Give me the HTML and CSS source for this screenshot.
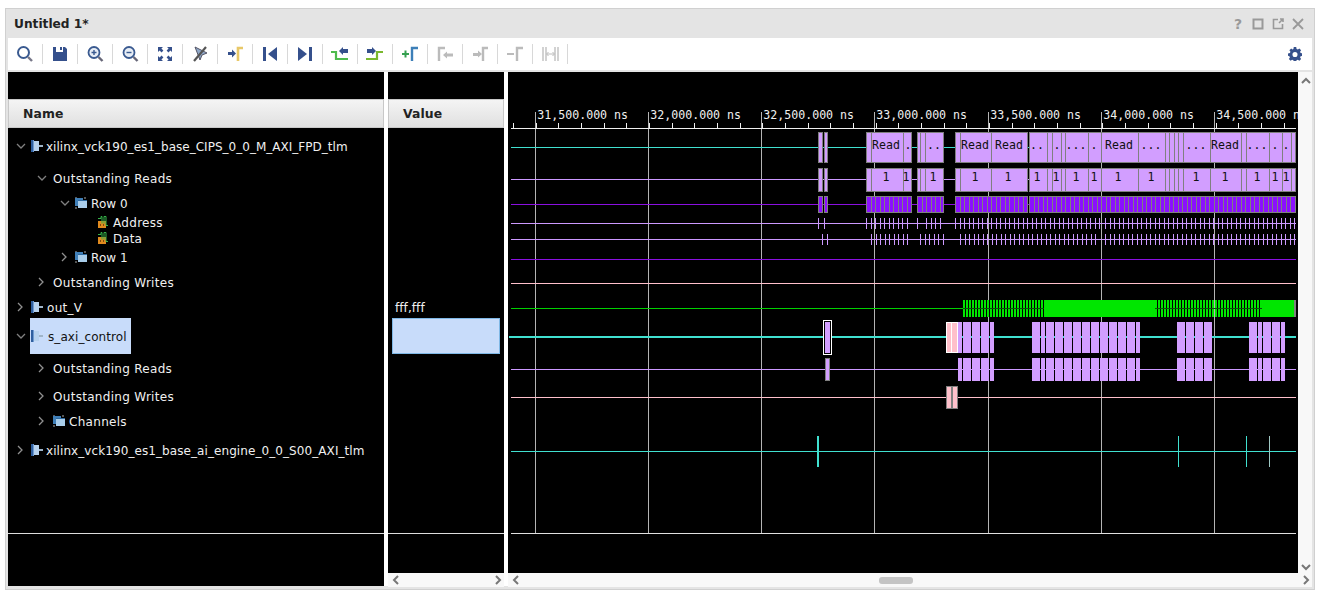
FILE: index.html
```html
<!DOCTYPE html>
<html lang="en">
  <head>
    <meta charset="UTF-8" />
    <title>Untitled 1*</title>
    <link rel="stylesheet" href="styles.css">
  </head>

  <body>
    <svg class="defs" width="0" height="0">
      <defs>
        <g id="ic-bus">
          <rect x="0" y="0" width="2" height="12" fill="#2f5f9f" />
          <rect x="2" y="0" width="1" height="12" fill="#6f9bd0" />
          <rect x="3" y="1" width="5" height="10" fill="#b7d2ee" />
          <rect x="8" y="5" width="4" height="2" fill="#9fb4c8" />
        </g>
        <g id="ic-group">
          <rect x="0" y="0" width="2" height="2" fill="#555" />
          <rect x="9" y="0" width="2" height="2" fill="#555" />
          <rect x="0" y="1" width="8" height="8" fill="#3f7fb8" />
          <rect x="3" y="3" width="9" height="8" fill="#a9cdea" />
          <rect x="3" y="3" width="9" height="1" fill="#2f6aa0" />
          <rect x="0" y="10" width="2" height="2" fill="#555" />
        </g>
        <g id="ic-leaf">
          <rect x="0" y="5" width="8" height="7" fill="#e08a1e" />
          <path d="M0 2.500h3V0.500h1v7M6 7.500V0.500h2v9h2" fill="none" stroke="#37b34a" />
          <rect x="2" y="8" width="1" height="2" fill="#7a4a10" />
          <rect x="5" y="8" width="1" height="2" fill="#7a4a10" />
        </g>
        <path id="chev-down" d="M1 1l4 4 4-4" fill="none" stroke="#808080" stroke-width="1.3" />
        <path id="chev-right" d="M1 1l4 4-4 4" fill="none" stroke="#909090" stroke-width="1.3" />
      </defs>
    </svg>

    <div class="window">
      <header class="titlebar">
        <h1>Untitled 1*</h1>
        <div class="win-btns">
          <span class="help">?</span>
          <svg width="12" height="12"><rect x="1.5" y="1.5" width="9" height="9" fill="none" stroke="#999" stroke-width="2" /></svg>
          <svg width="12" height="12"><path d="M6 1.500H1.500v9h9V6M7 5l4-4M8 1h3v3" fill="none" stroke="#999" stroke-width="1.6" /></svg>
          <svg width="12" height="12"><path d="M1 1l10 10M11 1L1 11" stroke="#999" stroke-width="1.8" /></svg>
        </div>
      </header>

      <nav class="toolbar">
        <button><svg width="20" height="20"><circle cx="8.5" cy="8.5" r="5.5" fill="none" stroke="#3a5a90" stroke-width="2" /><path d="M13 13l4 4" stroke="#778" stroke-width="2.4" /></svg></button>
        <button><svg width="20" height="20"><path d="M3 3h3v5h7V3h2l2 2v12H3z" fill="#35508c" /><rect x="10" y="3" width="2" height="3" fill="#35508c" /></svg></button>
        <button><svg width="20" height="20"><circle cx="9" cy="8.5" r="5.5" fill="#e8eef6" stroke="#3a5a90" stroke-width="1.8" /><path d="M6.500 8.500h5M9 6v5" stroke="#3a5a90" stroke-width="1.4" /><path d="M13.500 13l4 4" stroke="#667" stroke-width="2.4" /></svg></button>
        <button><svg width="20" height="20"><circle cx="9" cy="8.5" r="5.5" fill="#e8eef6" stroke="#3a5a90" stroke-width="1.8" /><path d="M6.500 8.500h5" stroke="#3a5a90" stroke-width="1.4" /><path d="M13.500 13l4 4" stroke="#667" stroke-width="2.4" /></svg></button>
        <button><svg width="20" height="20"><path d="M3 3h5L6.400 4.600l2 2-1.800 1.800-2-2L3 8zM17 3v5l-1.600-1.600-2 2-1.800-1.800 2-2L12 3zM3 17v-5l1.600 1.600 2-2 1.800 1.800-2 2L8 17zM17 17h-5l1.600-1.600-2-2 1.800-1.800 2 2L17 12z" fill="#35508c" /></svg></button>
        <button><svg width="20" height="20"><path d="M5 3l5 13 2-5 5-2z" fill="#8fa8c8" stroke="#556" /><path d="M16 3L4 17" stroke="#555" stroke-width="2.2" /></svg></button>
        <button><svg width="20" height="20"><path d="M3 8h4V5.500l4 4-4 4V11H3z" fill="#35508c" /><path d="M13 17V4h5" fill="none" stroke="#e8c868" stroke-width="2.6" /></svg></button>
        <button><svg width="20" height="20"><rect x="3" y="3" width="3" height="14" fill="#35508c" /><path d="M17 3v14l-9-7z" fill="#35508c" /></svg></button>
        <button><svg width="20" height="20"><rect x="14" y="3" width="3" height="14" fill="#35508c" /><path d="M3 3v14l9-7z" fill="#35508c" /></svg></button>
        <button><svg width="20" height="20"><path d="M1 8h5v7h12" fill="none" stroke="#4dbb4d" stroke-width="2.2" /><path d="M9 7l4-4v2h5v4h-5v2z" fill="#35508c" /></svg></button>
        <button><svg width="20" height="20"><path d="M1 15h11V8h6" fill="none" stroke="#7ab82e" stroke-width="2.2" /><path d="M2 5h5V3l4 4-4 4V9H2z" fill="#35508c" /></svg></button>
        <button><svg width="20" height="20"><path d="M2 10h7M5.500 6.500v7" stroke="#35a050" stroke-width="2" /><path d="M12 17V4h6" fill="none" stroke="#3d7fb8" stroke-width="2.4" /></svg></button>
        <button><svg width="20" height="20"><path d="M4 17V4h6" fill="none" stroke="#bbb" stroke-width="2.4" /><path d="M8 11l4-3.500v2h6v3h-6v2z" fill="#bbb" /></svg></button>
        <button><svg width="20" height="20"><path d="M3 9h5V6.500l4 3.500-4 3.500V12H3z" fill="#bbb" /><path d="M13 17V4h5" fill="none" stroke="#bbb" stroke-width="2.4" /></svg></button>
        <button><svg width="20" height="20"><path d="M2 10h7" stroke="#bbb" stroke-width="2" /><path d="M12 17V4h6" fill="none" stroke="#bbb" stroke-width="2.4" /></svg></button>
        <button><svg width="20" height="20"><path d="M3 3v14M6 3v14M15 3v14M18 3v14" stroke="#c4c4c4" stroke-width="1.500" /><path d="M7 10h7M8.500 8l-2 2 2 2M12.500 8l2 2-2 2" fill="none" stroke="#bbb" /></svg></button>
        <span class="spacer"></span>
        <svg class="gear" width="14" height="14" viewBox="0 0 16 16"><path d="M6.600 0h2.800l.4 2.200 1.500.6L13 1.600l2 2-1.200 1.800.6 1.500 2.200.4v2.800l-2.200.4-.6 1.500 1.200 1.800-2 2-1.800-1.200-1.500.6-.4 2.200H6.600l-.4-2.200-1.500-.6L3 15.800l-2-2 1.200-1.800-.6-1.500L0 10.100V7.300l2.200-.4.6-1.500L1.600 3.600l2-2 1.500 1.200 1.100-.6zM8 5.600a2.900 2.900 0 100 5.800 2.900 2.900 0 000-5.800z" fill="#35508c" fill-rule="evenodd" /></svg>
      </nav>

      <main class="panes">
        <section class="col-name">
          <div class="col-top"></div>
          <div class="col-head">Name</div>
          <div class="tree">
            <div class="row h35 lv0"><svg class="chev" width="10" height="10"><use href="#chev-down" y="2" /></svg><svg class="ico" width="12" height="12"><use href="#ic-bus" /></svg><span class="tight">xilinx_vck190_es1_base_CIPS_0_0_M_AXI_FPD_tlm</span></div>
            <div class="row h30 lv1"><svg class="chev" width="10" height="10"><use href="#chev-down" y="2" /></svg><span class="wide">Outstanding Reads</span></div>
            <div class="row h20 lv2"><svg class="chev" width="10" height="10"><use href="#chev-down" y="2" /></svg><svg class="ico grp" width="12" height="12"><use href="#ic-group" /></svg><span>Row 0</span></div>
            <div class="row h17 lv3"><svg class="ico" width="12" height="12"><use href="#ic-leaf" /></svg><span class="wide">Address</span></div>
            <div class="row h16 lv3"><svg class="ico" width="12" height="12"><use href="#ic-leaf" /></svg><span>Data</span></div>
            <div class="row h22 lv2"><svg class="chev" width="10" height="10"><use href="#chev-right" x="1" /></svg><svg class="ico grp" width="12" height="12"><use href="#ic-group" /></svg><span>Row 1</span></div>
            <div class="row h28 lv1"><svg class="chev" width="10" height="10"><use href="#chev-right" x="1" /></svg><span class="wide">Outstanding Writes</span></div>
            <div class="row h22 lv0"><svg class="chev" width="10" height="10"><use href="#chev-right" x="1" /></svg><svg class="ico grp" width="12" height="12"><use href="#ic-bus" /></svg><span class="wide">out_V</span></div>
            <div class="row h36 lv0"><svg class="chev" width="10" height="10"><use href="#chev-down" y="2" /></svg><div class="picked"><svg class="ico" width="12" height="12"><use href="#ic-bus" /></svg><span>s_axi_control</span></div></div>
            <div class="row h28 lv1"><svg class="chev" width="10" height="10"><use href="#chev-right" x="1" /></svg><span class="wide">Outstanding Reads</span></div>
            <div class="row h28 lv1"><svg class="chev" width="10" height="10"><use href="#chev-right" x="1" /></svg><span class="wide">Outstanding Writes</span></div>
            <div class="row h22 lv1"><svg class="chev" width="10" height="10"><use href="#chev-right" x="1" /></svg><svg class="ico grp" width="12" height="12"><use href="#ic-group" /></svg><span class="wide">Channels</span></div>
            <div class="row h36 lv0"><svg class="chev" width="10" height="10"><use href="#chev-right" x="1" /></svg><svg class="ico" width="12" height="12"><use href="#ic-bus" /></svg><span>xilinx_vck190_es1_base_ai_engine_0_0_S00_AXI_tlm</span></div>
          </div>
          <div class="col-foot"></div>
        </section>

        <section class="col-value">
          <div class="col-top"></div>
          <div class="col-head">Value</div>
          <div class="values">
            <div class="val-gap"></div>
            <div class="row h22 val-text"><span>fff,fff</span></div>
            <div class="val-picked"></div>
          </div>
          <div class="col-foot short"></div>
          <div class="hscroll">
            <svg width="10" height="10"><path d="M7 1L3 5l4 4" fill="none" stroke="#777" stroke-width="2" /></svg>
            <svg width="10" height="10"><path d="M3 1l4 4-4 4" fill="none" stroke="#777" stroke-width="2" /></svg>
          </div>
        </section>

        <section class="col-wave">
          <div class="wave-top">
            <svg id="wave" width="790" height="501" viewBox="508 72 790 501"></svg>
            <aside class="vscroll">
              <svg width="10" height="10"><path d="M1 7l4-4 4 4" fill="none" stroke="#777" stroke-width="2" /></svg>
              <svg width="10" height="10"><path d="M1 3l4 4 4-4" fill="none" stroke="#777" stroke-width="2" /></svg>
            </aside>
          </div>
          <div class="hscroll">
            <svg width="10" height="10"><path d="M7 1L3 5l4 4" fill="none" stroke="#777" stroke-width="2" /></svg>
            <div class="thumb"></div>
            <svg width="10" height="10"><path d="M3 1l4 4-4 4" fill="none" stroke="#777" stroke-width="2" /></svg>
          </div>
        </section>
      </main>
    </div>

    <script src="wave.js"></script>
  </body>
</html>
```

FILE: styles.css
```css
* {
  box-sizing: border-box;
}
body {
  margin: 0;
  background-color: #fff;
  font-family: "DejaVu Sans", sans-serif;
  font-size: 12px;
  overflow: hidden;
}
.defs {
  display: block;
  height: 0;
}
.window {
  width: 1310px;
  height: 582px;
  margin: 8px 0 0 5px;
  padding: 0 2px 3px 2px;
  background-color: #e4e4e4;
  border: 1px solid #d0d0d0;
  display: flex;
  flex-direction: column;
}
.titlebar {
  height: 29px;
  flex: none;
  display: flex;
  align-items: center;
  justify-content: space-between;
  padding: 0 8px 0 6px;
}
h1 {
  margin: 0;
  font-size: 12.2px;
  font-weight: bold;
  color: #222;
}
.win-btns {
  display: flex;
  align-items: center;
  gap: 8px;
}
.help {
  width: 12px;
  text-align: center;
  color: #999;
  font-weight: bold;
  font-size: 14px;
}
.toolbar {
  height: 32px;
  flex: none;
  background-color: #fff;
  display: flex;
  align-items: center;
}
.toolbar button {
  width: 35px;
  height: 20px;
  padding: 0 8px 0 7px;
  background: none;
  border: 0;
  border-right: 1px solid #d8d8d8;
  display: flex;
  align-items: center;
  justify-content: center;
}
.spacer {
  flex: 1;
}
.gear {
  margin-right: 10px;
}
.panes {
  flex: 1;
  min-height: 0;
  margin-top: 2px;
  display: flex;
  background-color: #fff;
}
.col-name {
  width: 376px;
  margin-right: 4px;
  display: flex;
  flex-direction: column;
  background-color: #000;
}
.col-value {
  width: 116px;
  margin-right: 4px;
  display: flex;
  flex-direction: column;
  background-color: #000;
}
.col-wave {
  width: 804px;
  display: flex;
  flex-direction: column;
}
.wave-top {
  display: flex;
}
.col-top {
  height: 27px;
  flex: none;
}
.col-head {
  height: 29px;
  flex: none;
  padding-left: 14px;
  line-height: 27px;
  font-weight: bold;
  font-size: 12.4px;
  letter-spacing: 0.1px;
  color: #222;
  background: linear-gradient(#f4f4f4, #e0e0e0);
  border: 1px solid #c8c8c8;
}
.tree,
.values {
  height: 405px;
  flex: none;
  color: #f0f0f0;
}
.col-foot {
  flex: 1;
  border-top: 1px solid #ddd;
}
.row {
  display: flex;
  align-items: center;
  white-space: nowrap;
}
.row span {
  margin-top: 2px;
  letter-spacing: 0.08px;
}
.row .wide {
  letter-spacing: 0.3px;
}
.row .tight {
  letter-spacing: 0.02px;
}
.h16 { height: 16px; }
.h17 { height: 17px; }
.h20 { height: 20px; }
.h22 { height: 22px; }
.h28 { height: 28px; }
.h30 { height: 30px; }
.h35 { height: 35px; }
.h36 { height: 36px; }
.lv0 { padding-left: 8px; }
.lv1 { padding-left: 29px; }
.lv2 { padding-left: 52px; }
.lv3 { padding-left: 90px; }
.chev {
  flex: none;
  margin-right: 5px;
}
.lv1 .chev {
  margin-right: 6px;
}
.ico {
  flex: none;
  margin-right: 3px;
}
.ico.grp {
  margin-right: 4px;
}
.picked {
  height: 100%;
  display: flex;
  align-items: center;
  margin-left: -1px;
  padding: 0 4px 0 1px;
  background-color: #c8dcfa;
  color: #111;
}
.picked .ico {
  margin-right: 5px;
}
.val-gap {
  height: 168px;
}
.val-text {
  padding-left: 7px;
}
.val-picked {
  height: 36px;
  margin: 0 4px;
  background-color: #c8dcfa;
  border: 1px solid #7fb8e6;
}
.hscroll {
  height: 14px;
  flex: none;
  background-color: #f8f8f8;
  display: flex;
  align-items: center;
  justify-content: space-between;
  padding: 0 1px 0 3px;
}
.col-foot.short {
  flex: none;
  height: 40px;
}
.thumb {
  width: 34px;
  height: 7px;
  margin-left: 358px;
  border-radius: 3px;
  background-color: #c4c4c4;
}
.col-wave .hscroll svg:last-child {
  margin-left: auto;
}
.vscroll {
  width: 14px;
  height: 501px;
  background-color: #f8f8f8;
  display: flex;
  flex-direction: column;
  align-items: center;
  justify-content: space-between;
  padding: 4px 0 1px 2px;
}
#wave {
  display: block;
  flex: none;
  background-color: #000;
  shape-rendering: crispEdges;
}
#wave text {
  font-family: "DejaVu Sans Mono", monospace;
  font-size: 11.6px;
}
.label-ruler {
  fill: #f0f0f0;
}
.label-bus {
  fill: #111;
  text-anchor: middle;
}
```

FILE: wave.js
```js
// draws the waveform canvas, coordinates are page pixels (see viewBox)
const svg = document.querySelector("#wave");
const NS = "http://www.w3.org/2000/svg";

const TURQ = "#40e0d0";
const LILAC = "#cc99ff";
const LILAC_FILL = "#d29eff";
const VIOLET = "#8b10ff";
const PINK = "#ffc0cb";
const GREEN = "#00e600";
const EDGE = "#808080";

function rect(x, y, w, h, fill, stroke) {
  const r = document.createElementNS(NS, "rect");
  r.setAttribute("x", x);
  r.setAttribute("y", y);
  r.setAttribute("width", w);
  r.setAttribute("height", h);
  r.setAttribute("fill", fill);
  if (stroke) r.setAttribute("stroke", stroke);
  svg.appendChild(r);
}

function text(x, y, str, cls) {
  const t = document.createElementNS(NS, "text");
  t.setAttribute("x", x);
  t.setAttribute("y", y);
  t.setAttribute("class", cls);
  t.textContent = str;
  svg.appendChild(t);
}

function line(y, color, h) {
  rect(511, y, 785, h || 1, color);
}

// ruler + grid
const majors = [535, 648, 761, 874, 988, 1101, 1214];
const times = ["31,500.000 ns", "32,000.000 ns", "32,500.000 ns", "33,000.000 ns", "33,500.000 ns", "34,000.000 ns", "34,500.000 ns"];

majors.forEach((x, i) => {
  rect(x, 112, 1, 421, "#b4b4b4");
  text(x + 2.3, 119, times[i], "label-ruler");
});
for (let x = 513; x < 1296; x += 22.67) {
  rect(Math.round(x), 123, 1, 5, "#f0f0f0");
}
rect(511, 128, 785, 1, "#f0f0f0");
rect(511, 533, 785, 1, "#e0e0e0");

// bus groups shared by the first three rows
const groups = [
  [818, 823, []],
  [824, 828, []],
  [866, 912, [871, 903]],
  [917, 944, [920, 925]],
  [955, 1028, [960, 991]],
  [1029, 1296, [1047, 1052, 1061, 1065, 1088, 1101, 1138, 1165, 1169, 1174, 1178, 1183, 1210, 1241, 1246, 1269, 1282, 1291]],
];

function busRow(top, bottom, lineY, lineColor) {
  line(lineY, lineColor);
  groups.forEach(([a, b, divs]) => {
    rect(a + 0.5, top + 0.5, b - a - 1, bottom - top - 1, LILAC_FILL, EDGE);
    divs.forEach((d) => rect(d, top, 1, bottom - top, EDGE));
  });
}

busRow(132, 163, 147, TURQ);
busRow(168, 192, 179, LILAC);

[[886, "Read"], [908, "."], [934, ".."], [975, "Read"], [1009, "Read"], [1037, ".."], [1057, "."], [1076, "..."], [1094, "."], [1119, "Read"], [1151, "..."], [1196, "..."], [1225, "Read"], [1257, "..."], [1275, "."], [1286, "."]]
  .forEach(([x, s]) => text(x, 149, s, "label-bus"));

[886, 906, 933, 975, 1008, 1037, 1056, 1076, 1094, 1118, 1151, 1196, 1225, 1257, 1275, 1286]
  .forEach((x) => text(x, 181, "1", "label-bus"));

// row 0 summary, violet stripes
line(204, "#8a10e0");
groups.forEach(([a, b]) => {
  rect(a + 0.5, 196.5, b - a - 1, 16, VIOLET, EDGE);
  for (let x = a + 4.5; x < b - 2; x += 4.5) {
    rect(Math.round(x), 197, 1, 16, EDGE);
  }
});

// address / data ticks
function ticks(y, ranges) {
  line(y, LILAC);
  ranges.forEach(([a, b]) => {
    for (let x = a; x <= b; x += 4.5) rect(Math.round(x), y - 5, 1, 11, LILAC);
  });
}
ticks(223, [[818, 818], [824, 824], [866, 908], [917, 920], [926, 940], [955, 1099], [1105, 1294]]);
ticks(239, [[822, 822], [827, 827], [871, 911], [920, 944], [960, 1099], [1105, 1294]]);

line(259, "#8a10e0");
line(283, PINK);

// out_V
line(308, "#00d000");
rect(1044, 300, 111, 17, GREEN);
rect(1262, 300, 32, 17, GREEN);
rect(1294, 300, 2, 17, EDGE);
[[963, 1044], [1155, 1262]].forEach(([a, b]) => {
  rect(a, 308, b - a, 1, "#0a500a");
  for (let x = a; x < b; x += 3) {
    rect(x, 300, 2, 8, GREEN);
    rect(x, 309, 2, 8, GREEN);
  }
});

// s_axi_control
const blocks = [
  [958, 962], [963, 971], [972, 980], [981, 989], [990, 994],
  [1032, 1040], [1041, 1045], [1046, 1054], [1055, 1063], [1064, 1072], [1073, 1081], [1082, 1090], [1091, 1099], [1100, 1108], [1109, 1117], [1118, 1126], [1127, 1135], [1136, 1140],
  [1177, 1185], [1186, 1194], [1195, 1203], [1204, 1212],
  [1249, 1257], [1258, 1262], [1263, 1271], [1272, 1280], [1281, 1285],
];

rect(509, 336, 787, 2, TURQ);
blocks.forEach(([a, b]) => rect(a, 322, b - a, 31, LILAC_FILL));
rect(823, 320, 9, 35, "#fff");
rect(824, 321, 7, 33, "#000");
rect(825, 322, 5, 31, LILAC_FILL);
rect(946, 322, 12, 31, "#fff");
rect(947, 323, 4, 29, PINK);
rect(952, 323, 5, 29, PINK);

line(369, LILAC);
blocks.forEach(([a, b]) => rect(a, 358, b - a, 23, LILAC_FILL));
rect(825.5, 358.5, 4, 22, LILAC_FILL, EDGE);

line(397, PINK);
rect(946.5, 386.5, 11, 22, PINK, EDGE);
rect(951, 386, 2, 23, EDGE);

// ai_engine pulses
line(451, TURQ);
rect(817, 436, 2, 31, TURQ);
[1178, 1246].forEach((x) => rect(x, 436, 1, 31, TURQ));
rect(1269, 436, 1, 31, "#9fc8c4");
```
